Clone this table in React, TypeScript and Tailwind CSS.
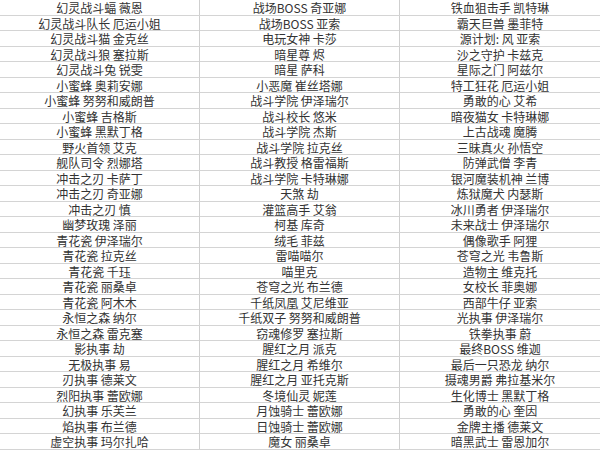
const rows: [string, string, string][] = [
  ['幻灵战斗蝠 薇恩', '战场BOSS 奇亚娜', '铁血狙击手 凯特琳'],
  ['幻灵战斗队长 厄运小姐', '战场BOSS 亚索', '霸天巨兽 墨菲特'],
  ['幻灵战斗猫 金克丝', '电玩女神 卡莎', '源计划: 风 亚索'],
  ['幻灵战斗狼 塞拉斯', '暗星尊 烬', '沙之守护 卡兹克'],
  ['幻灵战斗兔 锐雯', '暗星 萨科', '星际之门 阿兹尔'],
  ['小蜜蜂 奥莉安娜', '小恶魔 崔丝塔娜', '特工狂花 厄运小姐'],
  ['小蜜蜂 努努和威朗普', '战斗学院 伊泽瑞尔', '勇敢的心 艾希'],
  ['小蜜蜂 吉格斯', '战斗校长 悠米', '暗夜猫女 卡特琳娜'],
  ['小蜜蜂 黑默丁格', '战斗学院 杰斯', '上古战魂 魔腾'],
  ['野火首领 艾克', '战斗学院 拉克丝', '三昧真火 孙悟空'],
  ['舰队司令 烈娜塔', '战斗教授 格雷福斯', '防弹武僧 李青'],
  ['冲击之刃 卡萨丁', '战斗学院 卡特琳娜', '银河魔装机神 兰博'],
  ['冲击之刃 奇亚娜', '天煞 劫', '炼狱魔犬 内瑟斯'],
  ['冲击之刃 慎', '灌篮高手 艾翁', '冰川勇者 伊泽瑞尔'],
  ['幽梦玫瑰 泽丽', '柯基 库奇', '未来战士 伊泽瑞尔'],
  ['青花瓷 伊泽瑞尔', '绒毛 菲兹', '偶像歌手 阿狸'],
  ['青花瓷 拉克丝', '雷喵喵尔', '苍穹之光 韦鲁斯'],
  ['青花瓷 千珏', '喵里克', '造物主 维克托'],
  ['青花瓷 丽桑卓', '苍穹之光 布兰德', '女校长 菲奥娜'],
  ['青花瓷 阿木木', '千纸凤凰 艾尼维亚', '西部牛仔 亚索'],
  ['永恒之森 纳尔', '千纸双子 努努和威朗普', '光执事 伊泽瑞尔'],
  ['永恒之森 雷克塞', '窃魂修罗 塞拉斯', '铁拳执事 蔚'],
  ['影执事 劫', '腥红之月 派克', '最终BOSS 维迦'],
  ['无极执事 易', '腥红之月 希维尔', '最后一只恐龙 纳尔'],
  ['刃执事 德莱文', '腥红之月 亚托克斯', '摄魂男爵 弗拉基米尔'],
  ['烈阳执事 蕾欧娜', '冬境仙灵 妮莲', '生化博士 黑默丁格'],
  ['幻执事 乐芙兰', '月蚀骑士 蕾欧娜', '勇敢的心 奎因'],
  ['焰执事 布兰德', '日蚀骑士 蕾欧娜', '金牌主播 德莱文'],
  ['虚空执事 玛尔扎哈', '魔女 丽桑卓', '暗黑武士 雷恩加尔'],
];

export default function App() {
  return (
    <div
      className="w-[600px] h-[450px] overflow-hidden bg-white text-[#333] text-[12px]"
      style={{ fontFamily: '"Noto Sans CJK SC", "Liberation Sans", sans-serif' }}
    >
      {rows.map((r, i) => (
        <div key={i} className="grid grid-cols-3 h-[15.5px] border-b border-[#d4d4d4]">
          {r.map((t, j) => (
            <div
              key={j}
              className={
                'flex items-center justify-center leading-[15px] whitespace-nowrap' +
                (j < 2 ? ' border-r border-[#cfcfcf]' : '')
              }
            >
              {t}
            </div>
          ))}
        </div>
      ))}
    </div>
  );
}
